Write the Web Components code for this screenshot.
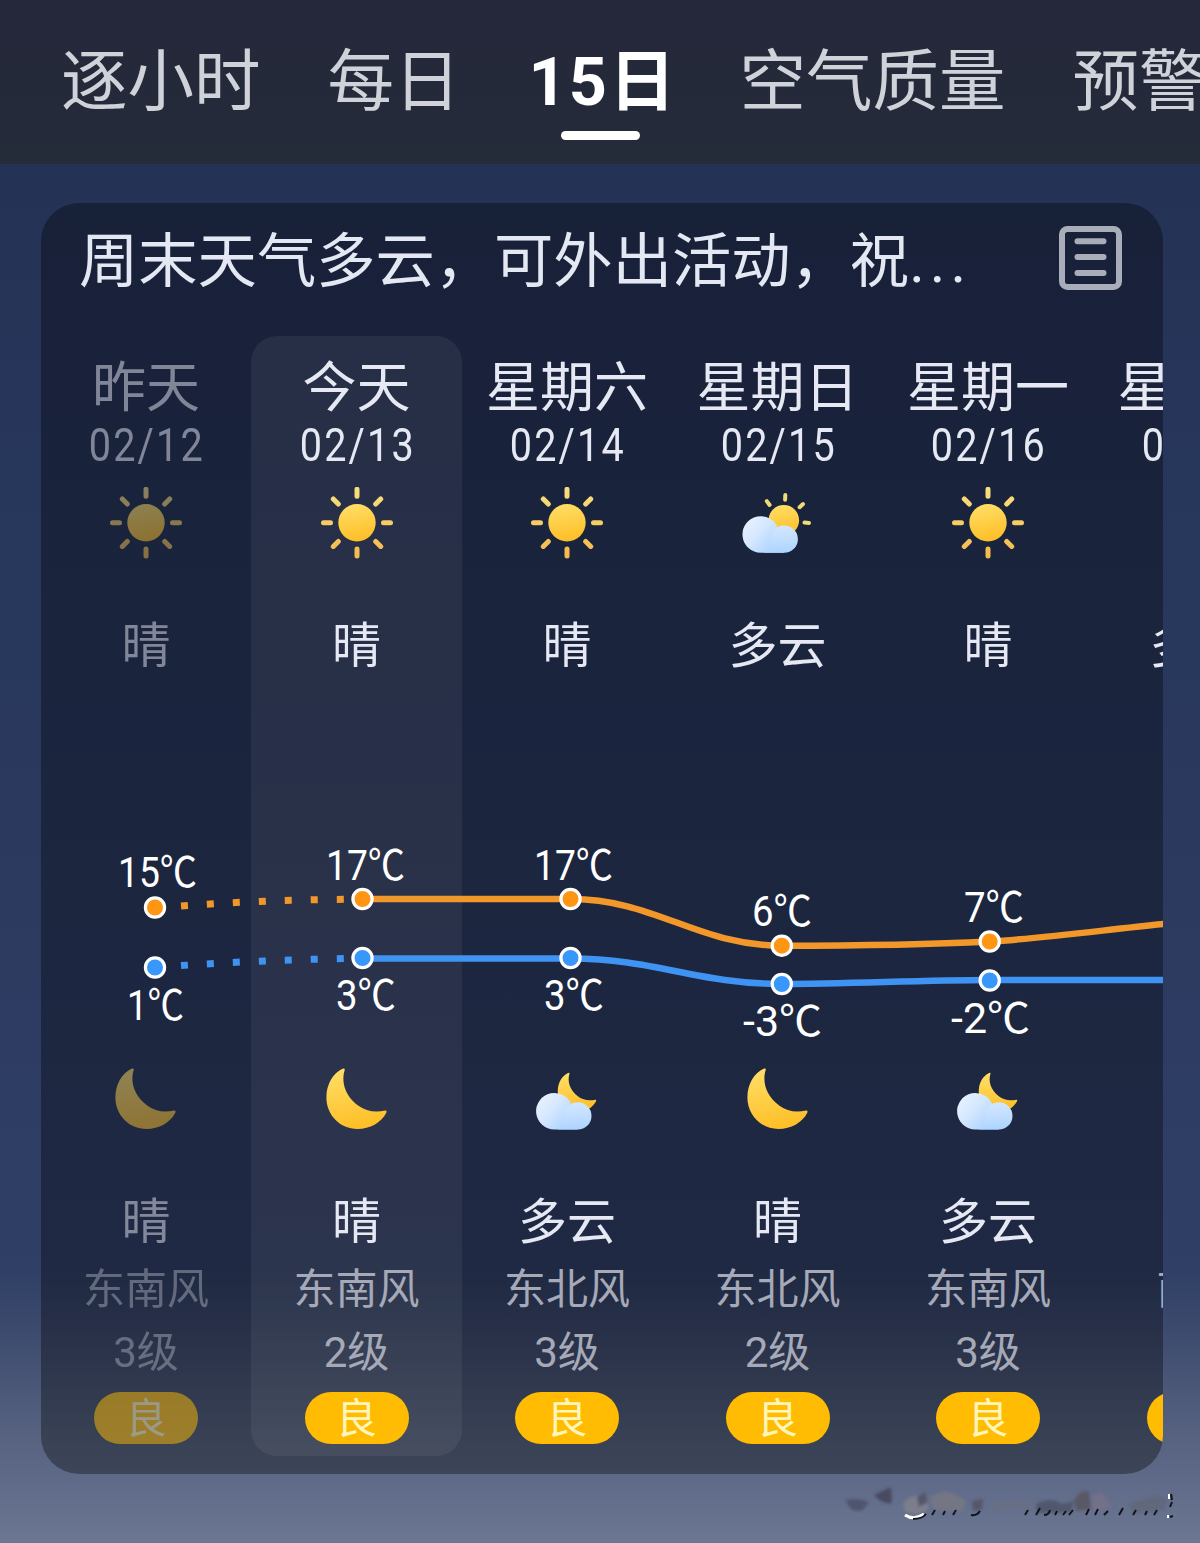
<!DOCTYPE html>
<html lang="zh-CN">
<head>
<meta charset="utf-8">
<title>15日天气</title>
<style>
  body {
    margin: 0;
    width: 1200px;
    height: 1543px;
    overflow: hidden;
    font-family: Roboto, "Noto Sans CJK SC", sans-serif;
  }
</style>
</head>
<body>
<weather-app>
  <tab-bar slot="tabs">
    <tab-item>逐小时</tab-item>
    <tab-item>每日</tab-item>
    <tab-item active>15日</tab-item>
    <tab-item>空气质量</tab-item>
    <tab-item>预警</tab-item>
  </tab-bar>
  <forecast-card>
    <span slot="title">周末天气多云，可外出活动，祝</span>
  </forecast-card>
  <photo-mark slot="footer"></photo-mark>
</weather-app>

<script>
const days = [
  { name: '昨天', date: '02/12', icon: 'sun', text: '晴', nightIcon: 'moon', nightText: '晴', wind: '东南风', level: '3级', past: true },
  { name: '今天', date: '02/13', icon: 'sun', text: '晴', nightIcon: 'moon', nightText: '晴', wind: '东南风', level: '2级', today: true },
  { name: '星期六', date: '02/14', icon: 'sun', text: '晴', nightIcon: 'cloud-moon', nightText: '多云', wind: '东北风', level: '3级' },
  { name: '星期日', date: '02/15', icon: 'cloud-sun', text: '多云', nightIcon: 'moon', nightText: '晴', wind: '东北风', level: '2级' },
  { name: '星期一', date: '02/16', icon: 'sun', text: '晴', nightIcon: 'cloud-moon', nightText: '多云', wind: '东南风', level: '3级' },
  { name: '星期二', date: '02/17', icon: 'cloud-sun', text: '多云', nightIcon: 'moon', nightText: '晴', wind: '南风', level: '3级' }
];

// x, y of the point; lx, ly, lw place its label
const highs = [
  { x: 155, y: 907.5, label: '15℃', lx: 118, ly: 887, lw: 79 },
  { x: 362.5, y: 899, label: '17℃', lx: 326, ly: 880, lw: 79 },
  { x: 570.5, y: 899, label: '17℃', lx: 534, ly: 880, lw: 79 },
  { x: 781.8, y: 945.7, label: '6℃', lx: 752, ly: 926, lw: 60 },
  { x: 989.7, y: 941.5, label: '7℃', lx: 964, ly: 922, lw: 60 }
];
const lows = [
  { x: 155, y: 967.5, label: '1℃', lx: 127, ly: 1020, lw: 57 },
  { x: 362.5, y: 958, label: '3℃', lx: 336, ly: 1010, lw: 60 },
  { x: 570.5, y: 958, label: '3℃', lx: 544, ly: 1010, lw: 60 },
  { x: 781.8, y: 984, label: '-3℃', lx: 743, ly: 1036, lw: 79 },
  { x: 989.7, y: 980.5, label: '-2℃', lx: 951, ly: 1033, lw: 79 }
];

class WeatherApp extends HTMLElement {
  constructor() {
    super();
    this.attachShadow({mode: 'open'}).innerHTML = `
      <style>
        :host {
          display: flex;
          flex-direction: column;
          height: 1543px;
          background: linear-gradient(#243255 164px, #27365b 500px, #2c3a60 900px, #303f66 1270px, #3c4a6d 1330px, #566280 1435px, #5d6987 1475px, #6d7793 1543px);
        }
        main {
          padding: 39px 37px 0 41px;
        }
      </style>
      <slot name="tabs"></slot>
      <main><slot></slot></main>
      <slot name="footer"></slot>
    `;
  }
}

class TabBar extends HTMLElement {
  constructor() {
    super();
    this.attachShadow({mode: 'open'}).innerHTML = `
      <style>
        :host {
          display: flex;
          gap: 67px;
          box-sizing: border-box;
          height: 164px;
          padding: 38px 0 0 61px;
          overflow: hidden;
          background: linear-gradient(#25283b, #242b39);
        }
      </style>
      <slot></slot>
    `;
  }
}

class TabItem extends HTMLElement {
  constructor() {
    super();
    this.attachShadow({mode: 'open'}).innerHTML = `
      <style>
        :host {
          display: flex;
          flex: none;
          flex-direction: column;
          align-items: center;
          color: #d0d2da;
          font-size: 66.5px;
          line-height: 88px;
          white-space: nowrap;
        }
        :host([active]) {
          width: 145px;
          color: #fff;
          font-weight: 700;
          letter-spacing: 2px;
          text-indent: 6px;
        }
        :host([active])::after {
          content: "";
          width: 79px;
          height: 9px;
          margin-top: 5px;
          border-radius: 5px;
          background: #fff;
        }
      </style>
      <span><slot></slot></span>
    `;
  }
}

class WeatherIcon extends HTMLElement {
  constructor() {
    super();
    this.attachShadow({mode: 'open'});
  }

  connectedCallback() {
    const moon = `<path fill="url(#gold)" d="M23.7 7C20.5 17 22.5 32 37.8 43C44.5 48 54 49.8 64 47.5Q66.2 47.3 65.3 49.8C60 60 49 66 36.5 66C19 66 5.4 52 5.4 34.5C5.4 21 12 10.5 21.5 5.8Q24.3 4.8 23.7 7Z"/>`;
    const cloud = `
      <path fill="url(#cloud)" d="M18.8 65.8A18.3 18.3 0 1 1 36.3 42.2L42.2 65.8Z"/>
      <path fill="url(#puff)" d="M42.2 65.8A13.7 13.7 0 1 0 28.5 52Q28.5 60 22 65.8Z"/>`;
    const art = {
      'sun': `
        <circle cx="36" cy="35.7" r="18.7" fill="url(#gold)"/>
        <path stroke="url(#ray)" stroke-width="5" stroke-linecap="round" d="M36 2.3v7M36.01 62v7M2.5 35.7h7M62.5 35.71h7M12.3 12l5 5M54.7 54.4l5 5M59.7 12l-5 5M17.3 54.4l-5 5"/>`,
      'moon': moon,
      'cloud-sun': `
        <circle cx="41.8" cy="33.3" r="15.3" fill="url(#gold)"/>
        <path stroke="#f3d876" stroke-width="4" stroke-linecap="round" d="M43.3 8l-.2 4.7M24.8 14.1l2.8 3.9M61 17l-3.4 3.2M62.5 35.5l4.5.6"/>
        ${cloud}`,
      'cloud-moon': `
        <g transform="translate(23.3 6.3) scale(.64)">${moon}</g>
        <g transform="translate(4.6 .8)">${cloud}</g>`
    };
    this.shadowRoot.innerHTML = `
      <style>
        :host { display: block; width: 72px; height: 72px; }
        svg { display: block; }
      </style>
      <svg width="72" height="72" viewBox="0 0 72 72" fill="none">
        <defs>
          <linearGradient id="gold" x1="0" y1="0" x2="0.2" y2="1"><stop stop-color="#ffe06a"/><stop offset="1" stop-color="#fec02a"/></linearGradient>
          <linearGradient id="ray" gradientUnits="userSpaceOnUse" x1="36" y1="0" x2="36" y2="72"><stop stop-color="#f7e07e"/><stop offset="1" stop-color="#f5b84a"/></linearGradient>
          <linearGradient id="cloud" x1="0" y1="0.2" x2="1" y2="1"><stop stop-color="#e6f1ff"/><stop offset="0.35" stop-color="#d6e8ff"/><stop offset="0.8" stop-color="#add4ff"/></linearGradient>
          <linearGradient id="puff" x1="0.4" y1="0" x2="0.5" y2="1"><stop stop-color="#d3e6fd"/><stop offset="0.4" stop-color="#c6e0ff"/><stop offset="1" stop-color="#add4ff"/></linearGradient>
        </defs>
        ${art[this.getAttribute('name')]}
      </svg>
    `;
  }
}

class DayColumn extends HTMLElement {
  constructor() {
    super();
    this.attachShadow({mode: 'open'});
  }

  set day(day) {
    this.toggleAttribute('past', !!day.past);
    this.toggleAttribute('today', !!day.today);
    this.shadowRoot.innerHTML = `
      <style>
        :host {
          display: flex;
          flex: none;
          flex-direction: column;
          align-items: center;
          box-sizing: border-box;
          width: 210.5px;
          height: 1120px;
          padding-top: 18px;
          border-radius: 26px;
          color: #e6e9f3;
          white-space: nowrap;
        }
        :host([today]) { background: rgba(255, 255, 255, 0.06); }
        :host([past]) > * { opacity: 0.5; }
        .name { font-size: 54px; line-height: 70px; }
        .date {
          margin-top: -3px;
          font-size: 46px;
          line-height: 48px;
          letter-spacing: 2.5px;
          text-indent: 2.5px;
          transform: scaleX(0.86);
        }
        .icon { margin-top: 18px; }
        .text { margin-top: 62px; font-size: 49px; line-height: 52px; }
        .night { margin-top: 390px; }
        .wind, .level { font-size: 42px; line-height: 52px; color: #a5a9b8; }
        .wind { margin-top: 15px; }
        .level { margin-top: 11px; }
        .aqi {
          width: 104px;
          height: 52px;
          margin-top: 13px;
          border-radius: 26px;
          background: #ffbc02;
          color: #fff6bb;
          font-size: 41px;
          line-height: 55px;
          text-align: center;
        }
      </style>
      <div class="name">${day.name}</div>
      <div class="date">${day.date}</div>
      <weather-icon class="icon" name="${day.icon}"></weather-icon>
      <div class="text">${day.text}</div>
      <weather-icon class="night" name="${day.nightIcon}"></weather-icon>
      <div class="text">${day.nightText}</div>
      <div class="wind">${day.wind}</div>
      <div class="level">${day.level}</div>
      <div class="aqi">良</div>
    `;
  }
}

class TempChart extends HTMLElement {
  constructor() {
    super();
    this.attachShadow({mode: 'open'});
  }

  connectedCallback() {
    this.shadowRoot.innerHTML = `
      <style>
        :host { display: block; }
        svg { display: block; }
        path { fill: none; stroke-width: 6.5; }
        circle { stroke: #fff; stroke-width: 3.2; }
        text { fill: #fff; font-size: 42px; }
        .high { stroke: #f2972a; }
        .low { stroke: #3f93f2; }
        .dots { stroke-width: 7; stroke-dasharray: 7 19; }
      </style>
      <svg width="1122" height="220" viewBox="41 840 1122 220">
        <path class="high dots" d="M181 906Q262 900 345 899.3"/>
        <path class="low dots" d="M181 965.6Q262 960 345 958.6"/>
        <path class="high" d="M362.5 899H570.5C655 899 697 945.7 781.8 945.7C860 945.7 925 944.8 989.7 941.5C1050 938 1110 929 1170 923.3"/>
        <path class="low" d="M362.5 958.6H570.5C655 958.6 697 984 781.8 984C850 984 920 980 989.7 980H1170"/>
        ${this._points(highs, '#fe9513')}
        ${this._points(lows, '#3797fa')}
      </svg>
    `;
  }

  _points(list, color) {
    return list.map(p => `
      <circle cx="${p.x}" cy="${p.y}" r="9.6" fill="${color}"/>
      <text x="${p.lx}" y="${p.ly}" textLength="${p.lw}" lengthAdjust="spacingAndGlyphs">${p.label}</text>
    `).join('');
  }
}

class ForecastCard extends HTMLElement {
  constructor() {
    super();
    this.attachShadow({mode: 'open'});
  }

  connectedCallback() {
    this.shadowRoot.innerHTML = `
      <style>
        :host {
          display: block;
          height: 1271px;
          overflow: hidden;
          border-radius: 38px;
          background: rgba(0, 0, 0, 0.34);
        }
        header {
          display: flex;
          align-items: flex-start;
          justify-content: space-between;
          height: 133px;
          padding: 0 41px 0 38px;
          box-sizing: border-box;
        }
        h2 {
          margin: 19px 0 0;
          color: #e4e8f3;
          font-size: 59.3px;
          font-weight: 400;
          line-height: 80px;
          white-space: nowrap;
        }
        .more { letter-spacing: 5px; }
        header svg { margin-top: 23px; }
        .strip { position: relative; display: flex; margin-left: -0.2px; }
        temp-chart { position: absolute; left: 0; top: 504px; }
      </style>
      <header>
        <h2><slot name="title"></slot><span class="more">...</span></h2>
        <svg width="63" height="64" viewBox="0 0 63 64" fill="none" stroke="#a9adba" stroke-width="6">
          <rect x="3" y="3" width="57" height="58" rx="5.5"/>
          <path stroke-linecap="round" d="M18.5 15.3h26M18.5 31h26M18.5 47h26"/>
        </svg>
      </header>
      <div class="strip">
        <temp-chart></temp-chart>
      </div>
    `;
    const strip = this.shadowRoot.querySelector('.strip');
    const chart = this.shadowRoot.querySelector('temp-chart');
    days.forEach(day => {
      const column = document.createElement('day-column');
      column.day = day;
      strip.insertBefore(column, chart);
    });
  }
}

// smudged signature under the card
class PhotoMark extends HTMLElement {
  constructor() {
    super();
    this.attachShadow({mode: 'open'}).innerHTML = `
      <style>
        :host { display: block; height: 69px; padding-left: 830px; }
        svg { display: block; }
      </style>
      <svg width="370" height="69" viewBox="0 4 370 69">
        <defs><filter id="soft" x="-20%" y="-50%" width="140%" height="200%"><feGaussianBlur stdDeviation="1.6"/></filter></defs>
        <g filter="url(#soft)">
          <path fill="#50556c" d="M15 30q12-3 24 2l-6 8q-8 3-13-2z"/>
          <path fill="#484a62" d="M44 25l17-8 1 16q-9 2-18-8z"/>
          <path fill="#7d7e8c" d="M74 32q10-10 24-4v12q-14 8-24 0z"/>
          <path fill="#55566c" d="M87 27l8-5 3 10-9 5z"/>
          <path fill="#747684" d="M100 28q14-11 26-3l10 6-4 10-28-1z"/>
          <path fill="#55566a" d="M142 31l11-2-1 11-9 1z"/>
          <path fill="#686e84" d="M158 33l40-4 6 8-40 4z"/>
          <path fill="#50586d" d="M206 34q15-8 26 0l12-3-3 11-34 1z"/>
          <path fill="#5a5865" d="M244 30q8-12 15-8l2 17-15 2z"/>
          <path fill="#72708a" d="M262 25l10-3 10 14-12 6-8-3z"/>
          <path fill="#60677b" d="M298 34l30-9 9 6-3 9-30 4z"/>
        </g>
        <path fill="none" stroke="#fff" stroke-width="3" d="M75 45q9 6 19-1"/>
        <path fill="none" stroke="#11131d" stroke-width="2" d="M83 49q9 0 13-5M102 45l3-5M113 45l2-4M123 45l3-5M141 45q6 1 9-4M195 45l3-5M206 45l4-7M214 45q5 0 6-5M225 45l2-4M233 45l3-4M239 45l4-5M256 45l3-6M265 45l3-6M274 45l4-4M289 45l4-7M303 45l3-5M315 45l2-4M324 45l3-5M341 24l1 6M342 32l-2 5M340 47l3-1"/>
        <path stroke="#fff" stroke-width="2" d="M339 24v5M338 45v3"/>
      </svg>
    `;
  }
}

customElements.define('weather-icon', WeatherIcon);
customElements.define('day-column', DayColumn);
customElements.define('temp-chart', TempChart);
customElements.define('tab-item', TabItem);
customElements.define('tab-bar', TabBar);
customElements.define('forecast-card', ForecastCard);
customElements.define('photo-mark', PhotoMark);
customElements.define('weather-app', WeatherApp);
</script>
</body>
</html>
